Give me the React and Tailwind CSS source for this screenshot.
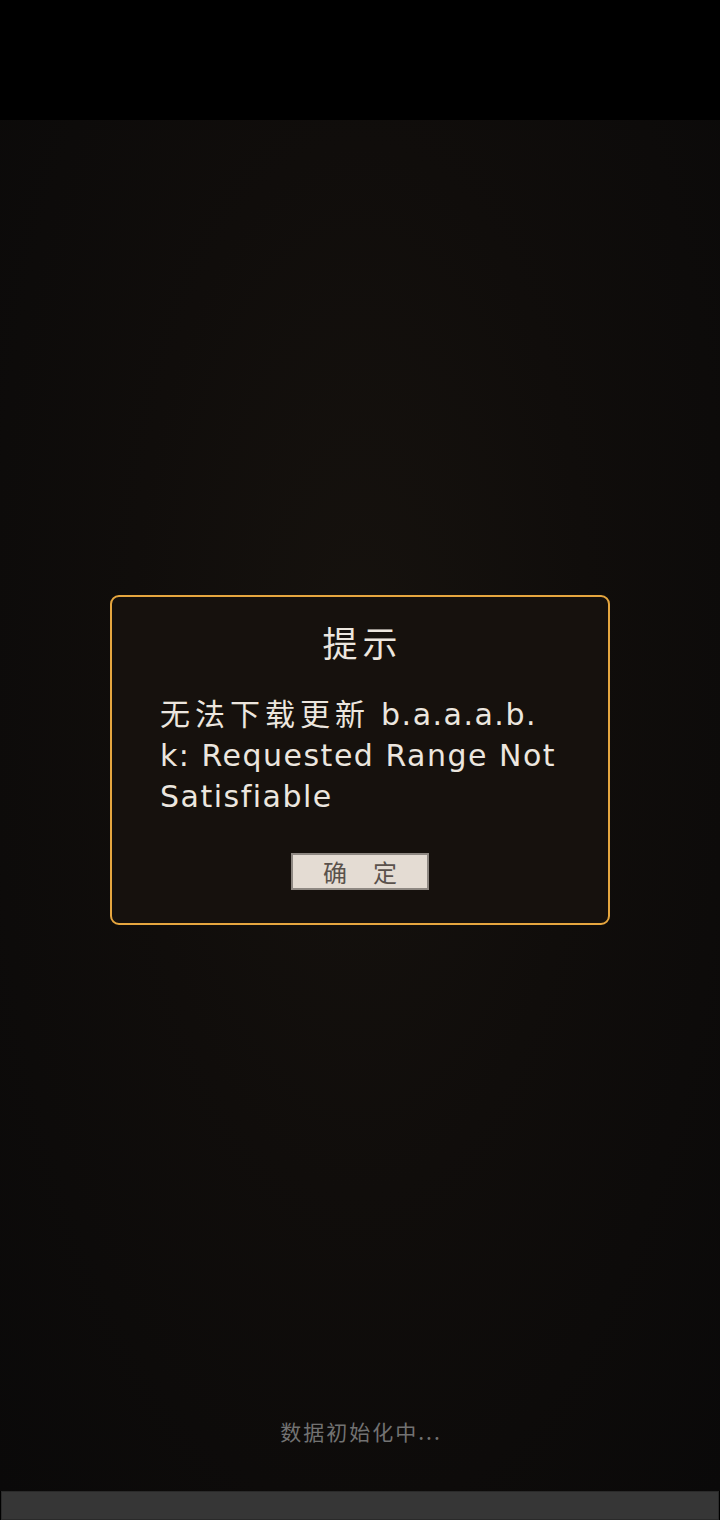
export default function App() {
  return (
    <div className="w-[720px] h-[1520px] bg-black flex flex-col overflow-hidden" style={{ fontFamily: '"Noto Sans CJK SC", "Noto Sans", sans-serif' }}>
      {/* status bar area */}
      <div className="h-[120px] bg-black" />

      {/* game background */}
      <div className="relative flex-1 flex flex-col items-center bg-[radial-gradient(ellipse_at_50%_40%,#16120e_0%,#100d0b_45%,#0a0909_100%)]">
        <div className="mt-[475px] w-[500px] h-[330px] rounded-[9px] border-2 border-[#e6a63f] bg-[#16110d] flex flex-col">
          <div className="pt-[20px] pl-[5px] text-center text-[35px] leading-[50px] tracking-[5px] text-[#ece6df]">提示</div>
          <div
            className="mt-[25px] px-[48px] text-[30px] leading-[41px] text-[#ece6df] tracking-[1.5px]"
            style={{ fontFamily: '"DejaVu Sans", "Noto Sans CJK SC", sans-serif' }}
          >
            <span className="text-[30px] tracking-[5px]" style={{ fontFamily: '"Noto Sans CJK SC", sans-serif' }}>无法下载更新</span>
            {" "}b.a.a.a.b.
            <br />
            k: Requested Range Not
            <br />
            Satisfiable
          </div>
          <div className="mt-[36px] flex justify-center">
            <button className="w-[138px] h-[37px] bg-[#e4dcd3] border-2 border-[#8e8882] text-[24px] leading-none text-[#5a524c] flex items-center justify-center">
              <span className="mr-[26px]">确</span>
              <span>定</span>
            </button>
          </div>
        </div>

        <div className="mt-[492px] pl-[2px] text-[21px] leading-[28px] tracking-[2px] text-[#727272]">数据初始化中...</div>
      </div>

      {/* loading bar */}
      <div className="h-[29px] mx-[1px] bg-[#363636] border border-[#2a2a2a]" />
    </div>
  );
}
